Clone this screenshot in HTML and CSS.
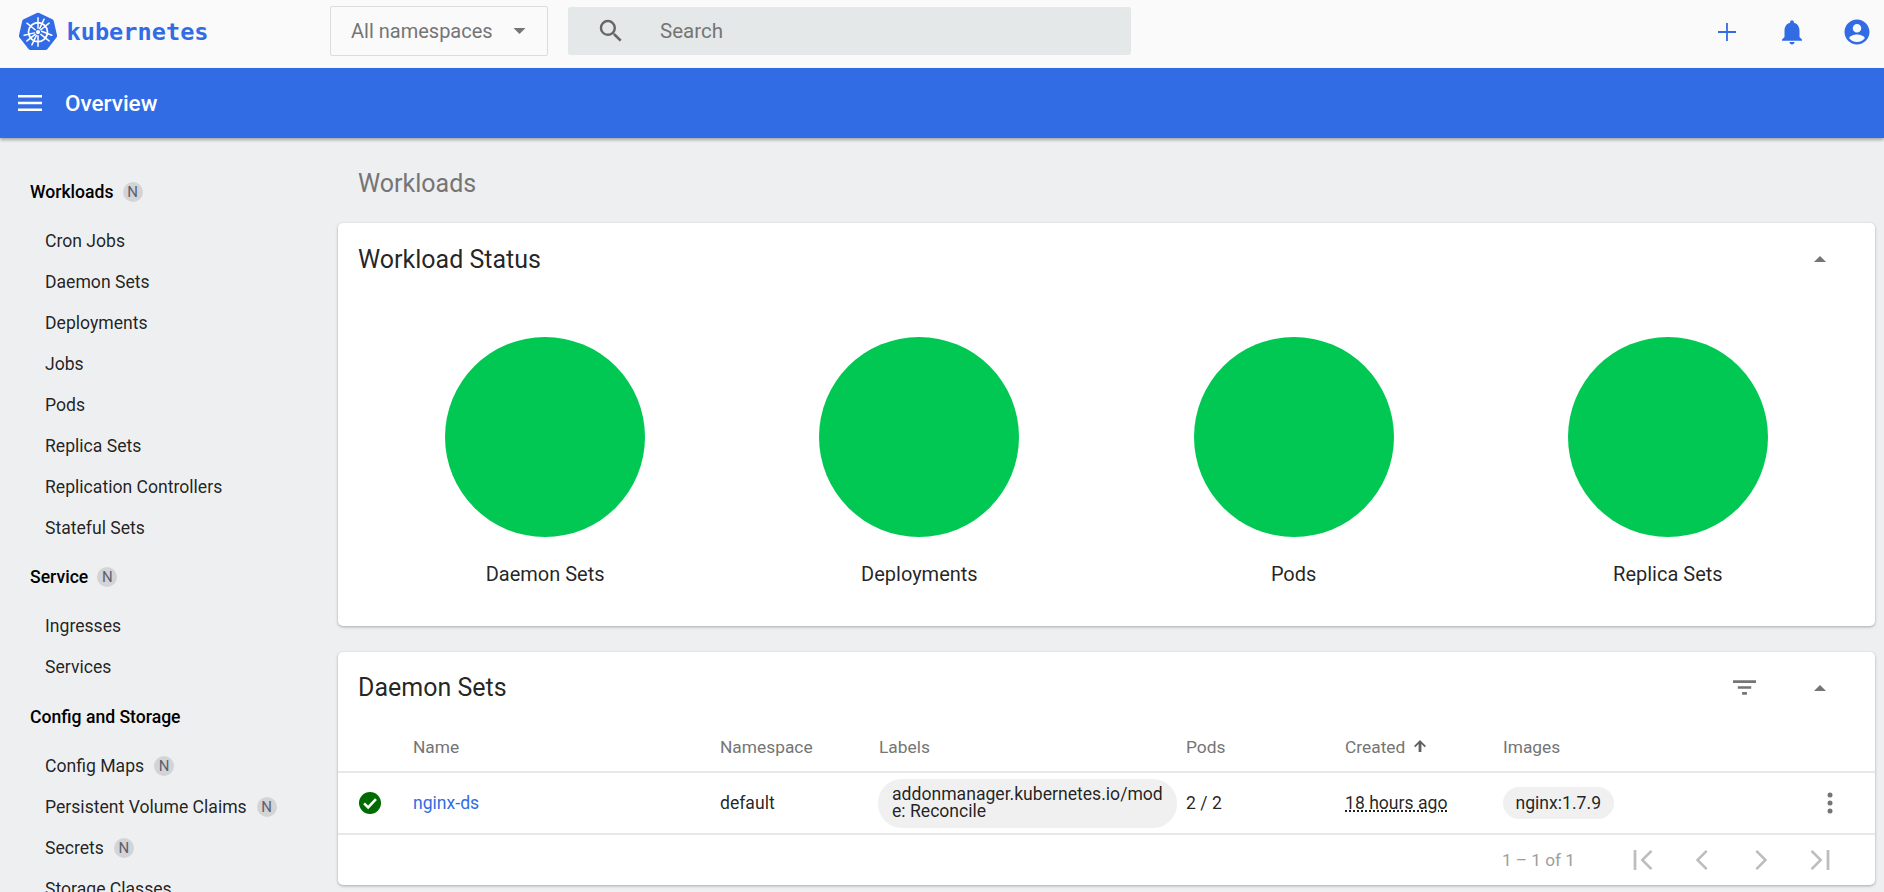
FILE: index.html
```html
<!DOCTYPE html>
<html lang="en">
<head>
<meta charset="utf-8">
<title>Overview - Kubernetes Dashboard</title>
<link rel="stylesheet" href="styles.css">
</head>
<body>
<header class="toolbar">
  <div class="brand">
    <svg class="logo" viewBox="0 0 36 36">
      <path d="M18 0.600a2.600 2.600 0 0 1 1.100 .25L31.600 6.900a2.600 2.600 0 0 1 1.400 1.800l3 13.300a2.600 2.600 0 0 1 -.5 2.200L27 35a2.600 2.600 0 0 1 -2 1H11a2.600 2.600 0 0 1 -2 -1L.5 24.200a2.600 2.600 0 0 1 -.5 -2.200l3 -13.300a2.600 2.600 0 0 1 1.400 -1.800L16.900 .85a2.600 2.600 0 0 1 1.100 -.25z" fill="#326ce5"/>
      <g fill="none" stroke="#fff" stroke-linecap="round">
        <circle cx="18" cy="19" r="9" stroke-width="1.700"/>
        <path stroke-width="1.400" d="M18 5.500V15.500M18 22.500V32.500M7.500 10.600L15.300 16.800M20.700 21.200L28.500 27.400M28.500 10.600L20.700 16.800M15.300 21.200L7.500 27.400M4.900 22L14.600 19.800M21.400 18.200L31.100 22M12.200 31.200L16.500 22.200M19.500 15.800L23.800 6.800"/>
      </g>
      <circle cx="18" cy="19" r="2" fill="#fff"/>
    </svg>
    <span class="wordmark">kubernetes</span>
  </div>
  <div class="ns-select">
    <span>All namespaces</span>
    <svg class="ns-caret" viewBox="0 0 12 6"><path d="M0 0h12L6 6z"/></svg>
  </div>
  <div class="search">
    <svg class="search-icon" viewBox="0 0 24 24"><path d="M15.500 14h-.79l-.28-.27A6.470 6.470 0 0 0 16 9.500 6.500 6.500 0 1 0 9.500 16c1.610 0 3.090-.59 4.230-1.570l.27.28v.79l5 4.990L20.490 19l-4.990-5zm-6 0C7.010 14 5 11.990 5 9.500S7.010 5 9.500 5 14 7.010 14 9.500 11.990 14 9.500 14z"/></svg>
    <span>Search</span>
  </div>
  <div class="actions">
    <svg class="act act-plus" viewBox="0 0 20 20"><path d="M9 0h2v9h9v2h-9v9H9v-9H0V9h9z"/></svg>
    <svg class="act" viewBox="0 0 24 24"><path d="M12 22c1.100 0 2-.9 2-2h-4c0 1.100.9 2 2 2zm6-6v-5c0-3.070-1.630-5.640-4.500-6.320V4c0-.83-.67-1.500-1.500-1.500s-1.500.67-1.500 1.500v.68C7.640 5.360 6 7.920 6 11v5l-2 2v1h16v-1l-2-2z"/></svg>
    <svg class="act" viewBox="0 0 24 24"><path d="M12 2C6.480 2 2 6.480 2 12s4.480 10 10 10 10-4.480 10-10S17.520 2 12 2zm0 3.600a3.400 3.400 0 1 1 0 6.800 3.400 3.400 0 0 1 0-6.800zM12 20c-2.600 0-4.900-1.200-6.200-3.100C5.900 15 10 14 12 14s6.100 1 6.200 2.900C16.900 18.800 14.600 20 12 20z"/></svg>
  </div>
</header>
<div class="titlebar">
  <svg class="menu" viewBox="0 0 24 16"><path d="M0 0h24v2.600H0zM0 6.700h24v2.600H0zM0 13.400h24V16H0z"/></svg>
  <span class="page-title">Overview</span>
</div>
<div class="body-row">
  <nav class="sidenav">
    <div class="nav-head">Workloads <span class="badge">N</span></div>
    <a class="nav-item">Cron Jobs</a>
    <a class="nav-item">Daemon Sets</a>
    <a class="nav-item">Deployments</a>
    <a class="nav-item">Jobs</a>
    <a class="nav-item">Pods</a>
    <a class="nav-item">Replica Sets</a>
    <a class="nav-item">Replication Controllers</a>
    <a class="nav-item">Stateful Sets</a>
    <div class="nav-head">Service <span class="badge">N</span></div>
    <a class="nav-item">Ingresses</a>
    <a class="nav-item">Services</a>
    <div class="nav-head">Config and Storage</div>
    <a class="nav-item">Config Maps <span class="badge">N</span></a>
    <a class="nav-item">Persistent Volume Claims <span class="badge">N</span></a>
    <a class="nav-item">Secrets <span class="badge">N</span></a>
    <a class="nav-item">Storage Classes</a>
  </nav>
  <main class="content">
    <h2 class="section-title">Workloads</h2>
    <section class="card status-card">
      <div class="card-head">
        <h3 class="card-title">Workload Status</h3>
        <svg class="collapse" viewBox="0 0 12 6"><path d="M6 0l6 6H0z"/></svg>
      </div>
      <div class="charts">
        <div class="chart"><div class="circle"></div><div class="chart-label">Daemon Sets</div></div>
        <div class="chart"><div class="circle"></div><div class="chart-label">Deployments</div></div>
        <div class="chart"><div class="circle"></div><div class="chart-label">Pods</div></div>
        <div class="chart"><div class="circle"></div><div class="chart-label">Replica Sets</div></div>
      </div>
    </section>
    <section class="card table-card">
      <div class="card-head">
        <h3 class="card-title">Daemon Sets</h3>
        <svg class="filter" viewBox="0 0 24 15"><path d="M0 0h24v2.800H0zM5 6.100h14v2.800H5zM9.500 12.200h5V15h-5z"/></svg>
        <svg class="collapse" viewBox="0 0 12 6"><path d="M6 0l6 6H0z"/></svg>
      </div>
      <div class="grid grid-header">
        <span></span>
        <span>Name</span>
        <span>Namespace</span>
        <span>Labels</span>
        <span>Pods</span>
        <span class="sorted">Created
          <svg class="sort" viewBox="0 0 12 12"><path d="M6 0l6 6-1.300 1.200-3.300-3.200V12H4.600V4L1.300 7.200 0 6z"/></svg>
        </span>
        <span>Images</span>
        <span></span>
      </div>
      <div class="grid grid-row">
        <svg class="ok" viewBox="0 0 24 24"><circle cx="12" cy="12" r="12" fill="#006b00"/><path d="M5.500 12.400l4.500 4.500 8.500-9" fill="none" stroke="#fff" stroke-width="2.800"/></svg>
        <a class="link">nginx-ds</a>
        <span>default</span>
        <span class="chip chip-wrap">addonmanager.kubernetes.io/mode: Reconcile</span>
        <span>2 / 2</span>
        <span class="age">18 hours ago</span>
        <span class="chip chip-image">nginx:1.7.9</span>
        <svg class="more" viewBox="0 0 6 22"><circle cx="3" cy="3" r="2.500"/><circle cx="3" cy="11" r="2.500"/><circle cx="3" cy="19" r="2.500"/></svg>
      </div>
      <div class="pager">
        <span class="range">1 – 1 of 1</span>
        <svg class="pg" viewBox="0 0 24 24"><path d="M4.500 4h2.200v16H4.500zM19.500 5.400L18 4l-8 8 8 8 1.500-1.400L12.900 12z"/></svg>
        <svg class="pg" viewBox="0 0 24 24"><path d="M16.500 5.400L15 4l-8 8 8 8 1.500-1.400L9.900 12z"/></svg>
        <svg class="pg" viewBox="0 0 24 24"><path d="M7.500 5.400L9 4l8 8-8 8-1.500-1.400L14.100 12z"/></svg>
        <svg class="pg" viewBox="0 0 24 24"><path d="M17.300 4h2.200v16h-2.200zM4.500 5.400L6 4l8 8-8 8-1.500-1.400L11.100 12z"/></svg>
      </div>
    </section>
  </main>
</div>
</body>
</html>
```

FILE: styles.css
```css
* { box-sizing: border-box; }
html, body { margin: 0; height: 892px; overflow: hidden; }
body { font-family: Roboto, "Liberation Sans", sans-serif; background: #eeeff1; color: rgba(0,0,0,.87); display: flex; flex-direction: column; }

.toolbar { height: 68px; flex: none; background: #fafafa; display: flex; align-items: center; }
.brand { width: 330px; flex: none; display: flex; align-items: center; padding: 0 0 0 19px; gap: 9.500px; margin-top: -6px; }
.logo { width: 38px; height: 38px; }
.wordmark { font-family: "DejaVu Sans Mono", monospace; font-weight: 700; font-size: 23.600px; color: #326ce5; margin-top: 2px; }
.ns-select { width: 218px; height: 50px; flex: none; border: 1px solid #dcdcdc; border-radius: 2px; display: flex; align-items: center; justify-content: space-between; padding: 0 21px 0 20px; color: #757575; font-size: 20px; margin-top: -6px; }
.ns-caret { width: 13px; height: 6px; fill: #757575; }
.search { width: 563px; height: 48px; flex: none; margin-left: 20px; margin-top: -6px; background: #e5e8e8; border-radius: 2px; display: flex; align-items: center; color: #757575; font-size: 20.500px; padding-left: 28px; gap: 34px; }
.search-icon { width: 30px; height: 30px; fill: #666; }
.actions { margin-left: auto; margin-top: -4px; display: flex; align-items: center; gap: 35px; padding-right: 12px; }
.act { width: 30px; height: 30px; fill: #326ce5; display: block; }
.act-plus { width: 18px; height: 18px; margin-right: 6px; }

.titlebar { height: 70px; flex: none; background: #326ce5; box-shadow: 0 2px 3px rgba(0,0,0,.3); position: relative; z-index: 1; display: flex; align-items: center; color: #fff; padding: 0 0 0 18px; gap: 23px; }
.menu { width: 24px; height: 16px; fill: #fff; }
.page-title { font-size: 22.500px; font-weight: 500; }

.body-row { flex: 1; display: flex; min-height: 0; overflow: hidden; }
.sidenav { width: 338px; flex: none; padding: 33px 0 0 30px; font-size: 17.600px; color: rgba(0,0,0,.87); }
.nav-head { font-weight: 500; height: 41px; display: flex; align-items: center; gap: 9px; margin-bottom: 8px; color: #000; }
.nav-head ~ .nav-head { margin-top: 8.500px; }
.nav-item { height: 41px; display: flex; align-items: center; gap: 10px; padding-left: 15px; }
.badge { width: 20px; height: 20px; border-radius: 50%; background: #d3d4d6; color: #5c6070; font-size: 15px; font-weight: 400; display: inline-flex; align-items: center; justify-content: center; }

.content { flex: 1; min-width: 0; padding-right: 9px; }
.section-title { margin: 0; height: 85px; padding: 31px 0 0 20px; font-size: 25px; font-weight: 400; line-height: 30px; color: #757575; }
.card { background: #fff; border-radius: 5px; box-shadow: 0 1px 3px rgba(0,0,0,.3); }
.status-card { height: 403px; margin-bottom: 26px; }
.card-head { height: 72px; display: flex; align-items: center; padding: 0 49px 0 20px; }
.card-title { margin: 0; font-size: 25px; font-weight: 400; color: rgba(0,0,0,.87); flex: 1; }
.collapse { width: 12px; height: 6px; fill: #757575; }
.filter { width: 23px; height: 15px; fill: #757575; margin-right: 58px; }

.charts { display: grid; grid-template-columns: repeat(4, 1fr); padding: 0 20px; margin-top: 42px; }
.chart { display: flex; flex-direction: column; align-items: center; }
.circle { width: 200px; height: 200px; border-radius: 50%; background: #00c853; }
.chart-label { margin-top: 25px; font-size: 20px; line-height: 24px; color: rgba(0,0,0,.87); }

.table-card { height: 233px; }
.table-card .card-head { height: 71px; }
.grid { display: grid; grid-template-columns: 75px 307px 159px 307px 159px 158px 1fr 60px; align-items: center; }
.grid-header { height: 50px; font-size: 17.350px; color: #757575; border-bottom: 2px solid #e8e8e8; }
.sorted { display: flex; align-items: center; gap: 9px; }
.sort { width: 12px; height: 12px; fill: #616161; margin-top: -2px; }
.grid-row { height: 62px; font-size: 17.600px; border-bottom: 2px solid #e8e8e8; }
.ok { width: 22px; height: 22px; margin-left: 21px; }
.link { color: #326ce5; }
.chip { background: #f0f0f0; border-radius: 24px; color: rgba(0,0,0,.87); }
.chip-wrap { width: 299px; margin-left: -1px; padding: 7px 14px; height: 49px; line-height: 17px; word-break: break-all; }
.chip-image { justify-self: start; padding: 0 12.500px; height: 32px; line-height: 32px; }
.age { justify-self: start; text-decoration: underline dotted; text-underline-offset: 2px; }
.more { width: 6px; height: 22px; fill: #757575; justify-self: start; margin-left: 12px; }
.pager { height: 50px; display: flex; align-items: center; justify-content: flex-end; color: #9e9e9e; font-size: 17.200px; padding-right: 40px; gap: 29px; }
.range { margin-right: 24px; }
.pg { width: 30px; height: 30px; fill: #bdbdbd; }
```
